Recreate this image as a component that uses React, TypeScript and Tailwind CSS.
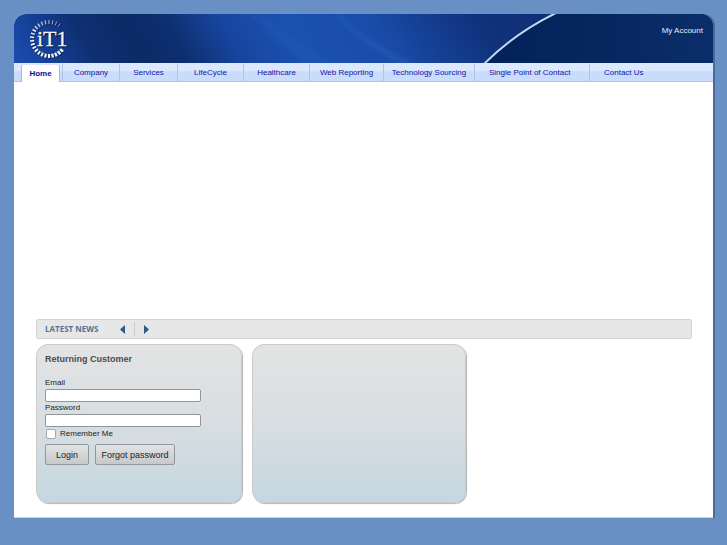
const navItems = [
  { label: "Company", className: "w-[57px] justify-center" },
  { label: "Services", className: "w-[58px] justify-center" },
  { label: "LifeCycle", className: "w-[66px] justify-center" },
  { label: "Healthcare", className: "w-[66px] justify-center" },
  { label: "Web Reporting", className: "w-[74px] justify-center" },
  { label: "Technology Sourcing", className: "w-[91px] justify-center" },
  { label: "Single Point of Contact", className: "w-[115px] pl-[14px]" },
  { label: "Contact Us", className: "flex-1 pl-[14px]" },
];

// dial ticks run from the top right, round the left side, to the bottom right
const ticks = Array.from({ length: 23 }, (_, i) => ({
  angle: 36 - i * 12,
  width: 0.9 + i * 0.07,
  opacity: Math.min(1, 0.5 + i * 0.06),
}));

function Logo() {
  return (
    <svg className="w-[44px] h-[46px]" viewBox="0 0 44 46" role="img" aria-label="iT1">
      <g transform="translate(24 23)" opacity="0.6">
        {ticks.map((t) => (
          <line key={t.angle} transform={`rotate(${t.angle})`} y1="-15" y2="-19" stroke="#04163d" strokeWidth={t.width} />
        ))}
      </g>
      <g transform="translate(23 22)">
        {ticks.map((t) => (
          <line key={t.angle} transform={`rotate(${t.angle})`} y1="-15" y2="-19" stroke="#f4f4ee" strokeWidth={t.width} opacity={t.opacity} />
        ))}
      </g>
      <g fontSize="22" fontFamily="Liberation Serif, serif">
        <text x="12" y="30" fill="#04163d" stroke="#04163d" strokeWidth="0.6" aria-hidden="true">iT1</text>
        <text x="11" y="29" fill="#f4f4ee" stroke="#f4f4ee" strokeWidth="0.3">iT1</text>
      </g>
    </svg>
  );
}

function HeaderArt() {
  return (
    <svg className="absolute inset-0 w-full h-full" viewBox="0 0 699 49" preserveAspectRatio="none" aria-hidden="true">
      <defs>
        <linearGradient id="sky" x1="0" y1="49" x2="699" y2="49" gradientUnits="userSpaceOnUse" gradientTransform="skewX(30) translate(-28 0)">
          <stop offset="0" stopColor="#1c4caf" />
          <stop offset="0.05" stopColor="#16429a" />
          <stop offset="0.12" stopColor="#0f2f72" />
          <stop offset="0.19" stopColor="#0b2a66" />
          <stop offset="0.25" stopColor="#0d2f70" />
          <stop offset="0.33" stopColor="#17459f" />
          <stop offset="0.42" stopColor="#1b51b0" />
          <stop offset="0.54" stopColor="#194dab" />
          <stop offset="0.62" stopColor="#143f93" />
          <stop offset="0.7" stopColor="#10327b" />
          <stop offset="1" stopColor="#0c2a68" />
        </linearGradient>
        <linearGradient id="night" x1="0" y1="0" x2="1" y2="0">
          <stop offset="0" stopColor="#03225a" />
          <stop offset="0.5" stopColor="#06265f" />
          <stop offset="1" stopColor="#0b2e6a" />
        </linearGradient>
        <filter id="soft">
          <feGaussianBlur stdDeviation="2" />
        </filter>
      </defs>
      <rect width="699" height="49" fill="url(#sky)" />
      <g filter="url(#soft)">
        <path d="M325 0 Q350 28 400 49 L385 49 Q345 28 321 0 Z" fill="#3a6cc4" opacity="0.3" />
        <path d="M250 0 Q285 30 320 49 L290 49 Q260 25 235 0 Z" fill="#2f62bf" opacity="0.2" />
      </g>
      <path d="M470 49 Q501 19 541 0 L699 0 L699 49 Z" fill="url(#night)" />
      <path d="M470 50 Q501 19 542 -1" fill="none" stroke="#c3d9f3" strokeWidth="2" />
    </svg>
  );
}

export default function App() {
  return (
    <div className="min-h-screen bg-[#6890c4] p-[14px] pb-[26px] font-['Liberation_Sans',Arial,sans-serif] text-[8px] leading-[10px] text-[#222]">
      <div className="bg-white rounded-t-[12px] border-b border-[#c4d2e4] shadow-[2px_0_0_#4a6b98]">
        <header className="relative h-[49px] overflow-hidden rounded-t-[12px]">
          <HeaderArt />
          <div className="relative flex justify-between items-start pl-[12px] pr-[10px] pt-[3px]">
            <Logo />
            <a href="#account" className="mt-[9px] text-[#e4ebf5]">My Account</a>
          </div>
        </header>

        <nav className="flex h-[19px] pl-[7px] border-b border-[#b0c6e4] bg-linear-to-b from-[#dbe9ff] from-40% to-[#c9dcfc] to-50% text-[#1414aa]">
          <a href="#home" className="flex items-center justify-center w-[39px] h-[17px] mt-[2px] rounded-t-[2px] border-x border-[#9dbadf] bg-white font-bold text-[#0a0a9c]">
            Home
          </a>
          <div className="flex flex-1 ml-[2px]">
            {navItems.map((item) => (
              <a key={item.label} href="#" className={`flex items-center whitespace-nowrap border-l border-[#adc5e8] mt-[1px] ${item.className}`}>
                {item.label}
              </a>
            ))}
          </div>
        </nav>

        <main className="pl-[22px] pr-[21px] pt-[237px] pb-[14px]">
          <section className="flex items-center h-[20px] px-[8px] rounded-[2px] border border-[#d4d4d4] bg-[#e7e7e7]">
            <h2 className="w-[74px] font-['Open_Sans','Noto_Sans',sans-serif] font-bold text-[#50759a]">LATEST NEWS</h2>
            <button type="button" aria-label="Previous">
              <svg className="w-[7px] h-[9px]" viewBox="0 0 7 9"><path d="M6 0 L1 4.5 L6 9 Z" fill="#2c5a86" /></svg>
            </button>
            <span className="w-px h-[14px] mx-[8px] bg-[#cbcbcb]" />
            <button type="button" aria-label="Next">
              <svg className="w-[7px] h-[9px]" viewBox="0 0 7 9"><path d="M1 0 L6 4.5 L1 9 Z" fill="#2c5a86" /></svg>
            </button>
          </section>

          <div className="flex gap-[10px] mt-[5px]">
            <form className="w-[206px] h-[159px] px-[8px] pt-[8px] rounded-[12px] border border-[#cbc9ca] shadow-[1px_1px_1px_#b5b5b5] bg-linear-to-b from-[#e3e3e3] via-[#d8dee1] to-[#c4d7e0]">
              <h2 className="text-[9px] leading-[12px] font-bold text-[#4c4c50]">Returning Customer</h2>
              <label htmlFor="email" className="block mt-[13px]">Email</label>
              <input id="email" type="email" className="block w-[156px] h-[13px] mt-[1px] px-[3px] rounded-[2px] border border-[#8f979c] bg-white" />
              <label htmlFor="password" className="block mt-[1px]">Password</label>
              <input id="password" type="password" className="block w-[156px] h-[13px] mt-[1px] px-[3px] rounded-[2px] border border-[#8f979c] bg-white" />
              <div className="flex items-center gap-[4px] mt-[2px]">
                <input id="remember" type="checkbox" className="appearance-none w-[10px] h-[10px] ml-[1px] rounded-[2px] border border-[#a3abb0] bg-white" />
                <label htmlFor="remember">Remember Me</label>
              </div>
              <div className="flex gap-[6px] mt-[5px] text-[9px]">
                <button type="submit" className="w-[44px] h-[21px] rounded-[2px] border border-[#92989c] bg-linear-to-b from-[#e2e3e4] to-[#c6c8ca]">Login</button>
                <button type="button" className="w-[80px] h-[21px] rounded-[2px] border border-[#92989c] bg-linear-to-b from-[#e2e3e4] to-[#c6c8ca]">Forgot password</button>
              </div>
            </form>
            <section className="w-[214px] h-[159px] rounded-[12px] border border-[#cbc9ca] shadow-[1px_1px_1px_#b5b5b5] bg-linear-to-b from-[#e3e3e3] via-[#d8dee1] to-[#c4d7e0]" />
          </div>
        </main>
      </div>
    </div>
  );
}
